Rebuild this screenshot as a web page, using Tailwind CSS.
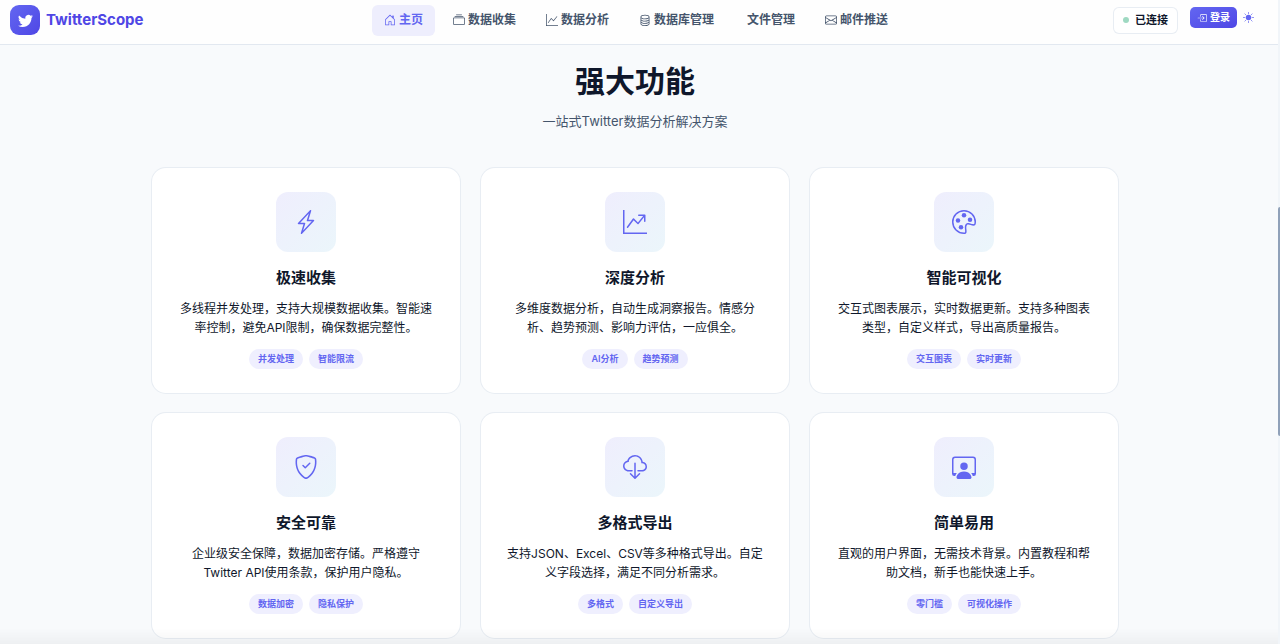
<!DOCTYPE html>
<html lang="zh-CN">

<head>
  <meta charset="UTF-8">
  <meta name="viewport" content="width=device-width, initial-scale=1.0">
  <title>TwitterScope</title>
  <script src="https://cdn.jsdelivr.net/npm/@tailwindcss/browser@4"></script>
</head>

<body class="bg-[#f8fafc] text-slate-900 font-['Inter','Noto_Sans_CJK_SC',sans-serif]">

  <header class="sticky top-0 z-10 grid grid-cols-[1fr_auto_1fr] items-center h-[45px] pb-1 pl-[10px] pr-[18px] bg-[#fefefe] border-b border-slate-200">
    <a href="#" class="flex items-center gap-[6px] text-[15px] font-bold text-[#4f46e5]">
      <span class="flex items-center justify-center size-[30px] rounded-[9px] bg-linear-to-br from-[#6366f1] to-[#4f46e5] text-white">
        <svg class="size-[15px]" viewBox="0 0 16 16" fill="currentColor"><path d="M5.026 15c6.038 0 9.341-5.003 9.341-9.334q.002-.211-.006-.422A6.7 6.7 0 0 0 16 3.542a6.7 6.7 0 0 1-1.889.518 3.3 3.3 0 0 0 1.447-1.817 6.5 6.5 0 0 1-2.087.793A3.286 3.286 0 0 0 7.875 6.03a9.32 9.32 0 0 1-6.767-3.429 3.29 3.29 0 0 0 1.018 4.382A3.3 3.3 0 0 1 .64 6.575v.045a3.29 3.29 0 0 0 2.632 3.218 3.2 3.2 0 0 1-.865.115 3 3 0 0 1-.614-.057 3.28 3.28 0 0 0 3.067 2.277A6.6 6.6 0 0 1 .78 13.58a6 6 0 0 1-.78-.045A9.34 9.34 0 0 0 5.026 15"/></svg>
      </span>
      TwitterScope
    </a>

    <nav class="flex items-center gap-[6px] text-xs font-semibold text-slate-600">
      <a href="#" class="flex items-center gap-[3px] h-[31px] px-3 rounded-md bg-[#eeeefd] text-[#6366f1]">
        <svg class="size-3" viewBox="0 0 16 16" fill="currentColor"><path d="M8.354 1.146a.5.5 0 0 0-.708 0l-6 6A.5.5 0 0 0 1.5 7.5v7a.5.5 0 0 0 .5.5h4.5a.5.5 0 0 0 .5-.5v-4h2v4a.5.5 0 0 0 .5.5H14a.5.5 0 0 0 .5-.5v-7a.5.5 0 0 0-.146-.354L13 5.793V2.5a.5.5 0 0 0-.5-.5h-1a.5.5 0 0 0-.5.5v1.293zM2.5 14V7.707l5.5-5.5 5.5 5.5V14H10v-4a.5.5 0 0 0-.5-.5h-3a.5.5 0 0 0-.5.5v4z"/></svg>
        主页
      </a>
      <a href="#" class="flex items-center gap-[3px] h-[31px] px-3 rounded-md">
        <svg class="size-3" viewBox="0 0 16 16" fill="currentColor"><path d="M2.5 3.5a.5.5 0 0 1 0-1h11a.5.5 0 0 1 0 1zm2-2a.5.5 0 0 1 0-1h7a.5.5 0 0 1 0 1zM0 13a1.5 1.5 0 0 0 1.5 1.5h13A1.5 1.5 0 0 0 16 13V6a1.5 1.5 0 0 0-1.5-1.5h-13A1.5 1.5 0 0 0 0 6zm1.5.5A.5.5 0 0 1 1 13V6a.5.5 0 0 1 .5-.5h13a.5.5 0 0 1 .5.5v7a.5.5 0 0 1-.5.5z"/></svg>
        数据收集
      </a>
      <a href="#" class="flex items-center gap-[3px] h-[31px] px-3 rounded-md">
        <svg class="size-3" viewBox="0 0 16 16" fill="currentColor"><path d="M0 0h1v15h15v1H0zm14.817 3.113a.5.5 0 0 1 .07.704l-4.5 5.5a.5.5 0 0 1-.74.037L7.06 6.767l-3.656 5.027a.5.5 0 0 1-.808-.588l4-5.5a.5.5 0 0 1 .758-.06l2.609 2.61 4.15-5.073a.5.5 0 0 1 .704-.07"/></svg>
        数据分析
      </a>
      <a href="#" class="flex items-center gap-[3px] h-[31px] px-3 rounded-md">
        <svg class="size-3" viewBox="0 0 16 16" fill="currentColor"><path d="M4.318 2.687C5.234 2.271 6.536 2 8 2s2.766.27 3.682.687C12.644 3.125 13 3.627 13 4c0 .374-.356.875-1.318 1.313C10.766 5.729 9.464 6 8 6s-2.766-.27-3.682-.687C3.356 4.875 3 4.373 3 4c0-.374.356-.875 1.318-1.313M13 5.698V7c0 .374-.356.875-1.318 1.313C10.766 8.729 9.464 9 8 9s-2.766-.27-3.682-.687C3.356 7.875 3 7.373 3 7V5.698c.271.202.58.378.904.525C4.978 6.711 6.427 7 8 7s3.022-.289 4.096-.777A5 5 0 0 0 13 5.698M14 4c0-1.007-.875-1.755-1.904-2.223C11.022 1.289 9.573 1 8 1s-3.022.289-4.096.777C2.875 2.245 2 2.993 2 4v9c0 1.007.875 1.755 1.904 2.223C4.978 15.71 6.427 16 8 16s3.022-.289 4.096-.777C13.125 14.755 14 14.007 14 13zm-1 4.698V10c0 .374-.356.875-1.318 1.313C10.766 11.729 9.464 12 8 12s-2.766-.27-3.682-.687C3.356 10.875 3 10.373 3 10V8.698c.271.202.58.378.904.525C4.978 9.71 6.427 10 8 10s3.022-.289 4.096-.777A5 5 0 0 0 13 8.698m0 3V13c0 .374-.356.875-1.318 1.313C10.766 14.729 9.464 15 8 15s-2.766-.27-3.682-.687C3.356 13.875 3 13.373 3 13v-1.302c.271.202.58.378.904.525C4.978 12.71 6.427 13 8 13s3.022-.289 4.096-.777c.324-.147.633-.323.904-.525"/></svg>
        数据库管理
      </a>
      <a href="#" class="flex items-center h-[31px] pl-[15px] pr-3 rounded-md">文件管理</a>
      <a href="#" class="flex items-center gap-[3px] h-[31px] px-3 rounded-md">
        <svg class="size-3" viewBox="0 0 16 16" fill="currentColor"><path d="M0 4a2 2 0 0 1 2-2h12a2 2 0 0 1 2 2v8a2 2 0 0 1-2 2H2a2 2 0 0 1-2-2zm2-1a1 1 0 0 0-1 1v.217l7 4.2 7-4.2V4a1 1 0 0 0-1-1zm13 2.383-4.708 2.825L15 11.105zm-.034 6.876-5.64-3.471L8 9.583l-1.326-.795-5.64 3.47A1 1 0 0 0 2 13h12a1 1 0 0 0 .966-.741M1 11.105l4.708-2.897L1 5.383z"/></svg>
        邮件推送
      </a>
    </nav>

    <div class="flex items-center justify-end gap-3">
      <div class="flex items-center gap-[6px] h-[27px] px-[9px] bg-white border border-slate-200/80 rounded-md text-[11px] font-semibold">
        <span class="size-[6px] rounded-full bg-[#9fd9c2]"></span>
        已连接
      </div>
      <div class="flex items-center pb-[5px]">
        <button class="flex items-center gap-[3px] h-[21px] px-[7px] rounded-[5px] bg-linear-to-br from-[#6366f1] to-[#4f46e5] text-white text-[10px] font-semibold">
          <svg class="size-[10px]" viewBox="0 0 16 16" fill="currentColor"><path d="M6 3.5a.5.5 0 0 1 .5-.5h8a.5.5 0 0 1 .5.5v9a.5.5 0 0 1-.5.5h-8a.5.5 0 0 1-.5-.5v-2a.5.5 0 0 0-1 0v2A1.5 1.5 0 0 0 6.5 14h8a1.5 1.5 0 0 0 1.5-1.5v-9A1.5 1.5 0 0 0 14.5 2h-8A1.5 1.5 0 0 0 5 3.5v2a.5.5 0 0 0 1 0z"/><path d="M11.854 8.354a.5.5 0 0 0 0-.708l-3-3a.5.5 0 1 0-.708.708L10.293 7.5H1.5a.5.5 0 0 0 0 1h8.793l-2.147 2.146a.5.5 0 0 0 .708.708z"/></svg>
          登录
        </button>
        <button class="pl-[6px] pr-2 text-[#6366f1]" aria-label="切换主题">
          <svg class="size-[11px]" viewBox="0 0 16 16" fill="none" stroke="currentColor" stroke-linecap="round"><circle cx="8" cy="8" r="4" fill="currentColor" stroke="none"/><path d="M8 .5v2M8 13.5v2M.5 8h2M13.5 8h2M2.7 2.7l1.4 1.4M11.9 11.9l1.4 1.4M2.7 13.3l1.4-1.4M11.9 4.1l1.4-1.4"/></svg>
        </button>
      </div>
    </div>
  </header>

  <main class="pt-4 pb-[6px] pl-4 pr-[26px]">
    <h1 class="text-[30px] leading-10 font-bold text-center">强大功能</h1>
    <p class="mt-[10px] text-[13px] leading-5 text-center text-slate-600">一站式Twitter数据分析解决方案</p>

    <div class="grid grid-cols-3 gap-x-[19px] gap-y-[18px] max-w-[968px] mx-auto mt-9">

      <section class="flex flex-col items-center p-6 bg-white border border-slate-200/80 rounded-[15px] text-center">
        <div class="flex items-center justify-center size-[60px] mb-4 rounded-xl bg-linear-to-br from-[#efeefd] to-[#ebf6fb] text-[#6366f1]">
          <svg class="size-6" viewBox="0 0 16 16" fill="currentColor"><path d="M11.251.068a.5.5 0 0 1 .227.58L9.677 6.5H13a.5.5 0 0 1 .364.843l-8 8.5a.5.5 0 0 1-.842-.49L6.323 9.5H3a.5.5 0 0 1-.364-.843l8-8.5a.5.5 0 0 1 .615-.09zM4.157 8.5H7a.5.5 0 0 1 .478.647L6.11 13.59l5.732-6.09H9a.5.5 0 0 1-.478-.647L9.89 2.41z"/></svg>
        </div>
        <h2 class="mb-[11px] text-[15px] leading-5 font-semibold">极速收集</h2>
        <p class="mb-3 text-xs leading-[19px]">多线程并发处理，支持大规模数据收集。智能速率控制，避免API限制，确保数据完整性。</p>
        <div class="flex gap-[6px] text-[9px] leading-5 font-semibold text-[#6366f1]">
          <span class="px-[9px] rounded-full bg-[#efeffe]">并发处理</span>
          <span class="px-[9px] rounded-full bg-[#efeffe]">智能限流</span>
        </div>
      </section>

      <section class="flex flex-col items-center p-6 bg-white border border-slate-200/80 rounded-[15px] text-center">
        <div class="flex items-center justify-center size-[60px] mb-4 rounded-xl bg-linear-to-br from-[#efeefd] to-[#ebf6fb] text-[#6366f1]">
          <svg class="size-6" viewBox="0 0 16 16" fill="currentColor"><path d="M0 0h1v15h15v1H0zm10 3.5a.5.5 0 0 1 .5-.5h4a.5.5 0 0 1 .5.5v4a.5.5 0 0 1-1 0V4.9l-3.613 4.417a.5.5 0 0 1-.74.037L7.06 6.767l-3.656 5.027a.5.5 0 0 1-.808-.588l4-5.5a.5.5 0 0 1 .758-.06l2.609 2.61L13.445 4H10.5a.5.5 0 0 1-.5-.5"/></svg>
        </div>
        <h2 class="mb-[11px] text-[15px] leading-5 font-semibold">深度分析</h2>
        <p class="mb-3 text-xs leading-[19px]">多维度数据分析，自动生成洞察报告。情感分析、趋势预测、影响力评估，一应俱全。</p>
        <div class="flex gap-[6px] text-[9px] leading-5 font-semibold text-[#6366f1]">
          <span class="px-[9px] rounded-full bg-[#efeffe]">AI分析</span>
          <span class="px-[9px] rounded-full bg-[#efeffe]">趋势预测</span>
        </div>
      </section>

      <section class="flex flex-col items-center p-6 bg-white border border-slate-200/80 rounded-[15px] text-center">
        <div class="flex items-center justify-center size-[60px] mb-4 rounded-xl bg-linear-to-br from-[#efeefd] to-[#ebf6fb] text-[#6366f1]">
          <svg class="size-6" viewBox="0 0 16 16" fill="currentColor"><circle cx="8" cy="3.5" r="1.5"/><circle cx="12" cy="6.5" r="1.5"/><circle cx="4" cy="7" r="1.5"/><circle cx="6" cy="11.5" r="1.5"/><path d="M16 8c0 3.15-1.866 2.585-3.567 2.07C11.42 9.763 10.465 9.473 10 10c-.603.683-.475 1.819-.351 2.92C9.826 14.495 9.996 16 8 16a8 8 0 1 1 8-8m-8 7c.611 0 .654-.171.655-.176.078-.146.124-.464.07-1.119-.014-.168-.037-.37-.061-.591-.052-.464-.112-1.005-.118-1.462-.01-.707.083-1.61.704-2.314.369-.417.845-.578 1.272-.618.404-.038.812.026 1.16.104.343.077.702.186 1.025.284l.028.008c.346.105.658.199.953.266.653.148.904.083.991.024C14.717 9.38 15 9.161 15 8a7 7 0 1 0-7 7"/></svg>
        </div>
        <h2 class="mb-[11px] text-[15px] leading-5 font-semibold">智能可视化</h2>
        <p class="mb-3 text-xs leading-[19px]">交互式图表展示，实时数据更新。支持多种图表类型，自定义样式，导出高质量报告。</p>
        <div class="flex gap-[6px] text-[9px] leading-5 font-semibold text-[#6366f1]">
          <span class="px-[9px] rounded-full bg-[#efeffe]">交互图表</span>
          <span class="px-[9px] rounded-full bg-[#efeffe]">实时更新</span>
        </div>
      </section>

      <section class="flex flex-col items-center p-6 bg-white border border-slate-200/80 rounded-[15px] text-center">
        <div class="flex items-center justify-center size-[60px] mb-4 rounded-xl bg-linear-to-br from-[#efeefd] to-[#ebf6fb] text-[#6366f1]">
          <svg class="size-6" viewBox="0 0 16 16" fill="currentColor"><path d="M5.338 1.59a61 61 0 0 0-2.837.856.48.48 0 0 0-.328.39c-.554 4.157.726 7.19 2.253 9.188a10.7 10.7 0 0 0 2.287 2.233c.346.244.652.42.893.533q.18.085.293.118a1 1 0 0 0 .101.025 1 1 0 0 0 .1-.025q.114-.034.294-.118c.24-.113.547-.29.893-.533a10.7 10.7 0 0 0 2.287-2.233c1.527-1.997 2.807-5.031 2.253-9.188a.48.48 0 0 0-.328-.39c-.651-.213-1.75-.56-2.837-.855C9.552 1.29 8.531 1.067 8 1.067c-.53 0-1.552.223-2.662.524zM5.072.56C6.157.265 7.31 0 8 0s1.843.265 2.928.56c1.11.3 2.229.655 2.887.87a1.54 1.54 0 0 1 1.044 1.262c.596 4.477-.787 7.795-2.465 9.99a11.8 11.8 0 0 1-2.517 2.453 7 7 0 0 1-1.048.625c-.28.132-.581.24-.829.24s-.548-.108-.829-.24a7 7 0 0 1-1.048-.625 11.8 11.8 0 0 1-2.517-2.453C1.928 10.487.545 7.169 1.141 2.692A1.54 1.54 0 0 1 2.185 1.43 63 63 0 0 1 5.072.56"/><path d="M10.854 5.146a.5.5 0 0 1 0 .708l-3 3a.5.5 0 0 1-.708 0l-1.5-1.5a.5.5 0 1 1 .708-.708L7.5 7.793l2.646-2.647a.5.5 0 0 1 .708 0"/></svg>
        </div>
        <h2 class="mb-[11px] text-[15px] leading-5 font-semibold">安全可靠</h2>
        <p class="mb-3 text-xs leading-[19px]">企业级安全保障，数据加密存储。严格遵守Twitter API使用条款，保护用户隐私。</p>
        <div class="flex gap-[6px] text-[9px] leading-5 font-semibold text-[#6366f1]">
          <span class="px-[9px] rounded-full bg-[#efeffe]">数据加密</span>
          <span class="px-[9px] rounded-full bg-[#efeffe]">隐私保护</span>
        </div>
      </section>

      <section class="flex flex-col items-center p-6 bg-white border border-slate-200/80 rounded-[15px] text-center">
        <div class="flex items-center justify-center size-[60px] mb-4 rounded-xl bg-linear-to-br from-[#efeefd] to-[#ebf6fb] text-[#6366f1]">
          <svg class="size-6" viewBox="0 0 16 16" fill="currentColor"><path d="M4.406 1.342A5.53 5.53 0 0 1 8 0c2.69 0 4.923 2 5.166 4.579C14.758 4.804 16 6.137 16 7.773 16 9.569 14.502 11 12.687 11H10a.5.5 0 0 1 0-1h2.688C13.979 10 15 8.988 15 7.773c0-1.216-1.02-2.228-2.313-2.228h-.5v-.5C12.188 2.825 10.328 1 8 1a4.53 4.53 0 0 0-2.941 1.1c-.757.652-1.153 1.438-1.153 2.055v.448l-.445.049C2.064 4.805 1 5.952 1 7.318 1 8.785 2.23 10 3.781 10H6a.5.5 0 0 1 0 1H3.781C1.708 11 0 9.366 0 7.318c0-1.763 1.266-3.223 2.942-3.593.143-.863.698-1.723 1.464-2.383"/><path d="M7.646 15.854a.5.5 0 0 0 .708 0l3-3a.5.5 0 0 0-.708-.708L8.5 14.293V5.5a.5.5 0 0 0-1 0v8.793l-2.146-2.147a.5.5 0 0 0-.708.708z"/></svg>
        </div>
        <h2 class="mb-[11px] text-[15px] leading-5 font-semibold">多格式导出</h2>
        <p class="mb-3 text-xs leading-[19px]">支持JSON、Excel、CSV等多种格式导出。自定义字段选择，满足不同分析需求。</p>
        <div class="flex gap-[6px] text-[9px] leading-5 font-semibold text-[#6366f1]">
          <span class="px-[9px] rounded-full bg-[#efeffe]">多格式</span>
          <span class="px-[9px] rounded-full bg-[#efeffe]">自定义导出</span>
        </div>
      </section>

      <section class="flex flex-col items-center p-6 bg-white border border-slate-200/80 rounded-[15px] text-center">
        <div class="flex items-center justify-center size-[60px] mb-4 rounded-xl bg-linear-to-br from-[#efeefd] to-[#ebf6fb] text-[#6366f1]">
          <svg class="size-6" viewBox="0 0 16 16" fill="currentColor"><path d="M4 16s-1 0-1-1 1-4 5-4 5 3 5 4-1 1-1 1zm4-5.95a2.5 2.5 0 1 0 0-5 2.5 2.5 0 0 0 0 5"/><path d="M2 1a2 2 0 0 0-2 2v9.5A1.5 1.5 0 0 0 1.5 14h.653a5.4 5.4 0 0 1 1.066-2H1V3a1 1 0 0 1 1-1h12a1 1 0 0 1 1 1v9h-2.219c.554.654.89 1.373 1.066 2h.653a1.5 1.5 0 0 0 1.5-1.5V3a2 2 0 0 0-2-2z"/></svg>
        </div>
        <h2 class="mb-[11px] text-[15px] leading-5 font-semibold">简单易用</h2>
        <p class="mb-3 text-xs leading-[19px]">直观的用户界面，无需技术背景。内置教程和帮助文档，新手也能快速上手。</p>
        <div class="flex gap-[6px] text-[9px] leading-5 font-semibold text-[#6366f1]">
          <span class="px-[9px] rounded-full bg-[#efeffe]">零门槛</span>
          <span class="px-[9px] rounded-full bg-[#efeffe]">可视化操作</span>
        </div>
      </section>

    </div>
  </main>

  <!-- bottom fade -->
  <div class="fixed inset-x-0 bottom-0 h-4 bg-linear-to-t from-black/4 to-transparent pointer-events-none"></div>

  <!-- scroll indicator -->
  <div class="fixed inset-y-0 right-0 z-20 w-[2px] bg-slate-100">
    <div class="mt-[207px] h-[229px] rounded-l-full bg-slate-400"></div>
  </div>

</body>

</html>
